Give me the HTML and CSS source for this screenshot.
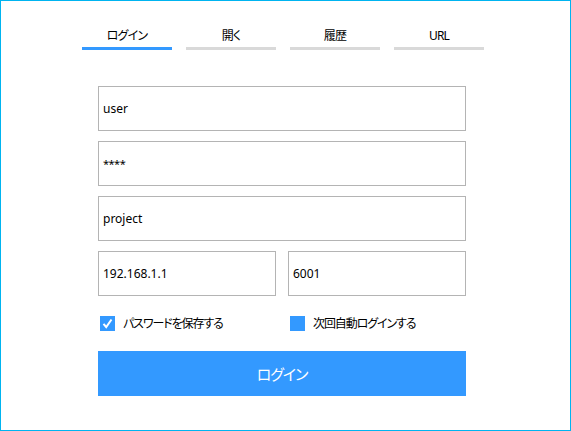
FILE: index.html
```html
<!DOCTYPE html>
<html lang="ja">
<head>
<meta charset="utf-8">
<link rel="stylesheet" href="styles.css">
</head>
<body>
<div class="frame">
  <div class="tabs">
    <div class="tab active">ログイン</div>
    <div class="tab">開く</div>
    <div class="tab">履歴</div>
    <div class="tab">URL</div>
  </div>
  <div class="form">
    <div class="field">user</div>
    <div class="field pw">****</div>
    <div class="field">project</div>
    <div class="pair">
      <div class="field">192.168.1.1</div>
      <div class="field">6001</div>
    </div>
    <div class="pair checks">
      <div class="check">
        <span class="box"><svg width="15" height="15" viewBox="0 0 15 15"><polyline points="3.5,7.8 6.2,11 11.5,3.5" fill="none" stroke="#fff" stroke-width="2"/></svg></span>
        <span class="label">パスワードを保存する</span>
      </div>
      <div class="check">
        <span class="box"></span>
        <span class="label">次回自動ログインする</span>
      </div>
    </div>
    <div class="button">ログイン</div>
  </div>
</div>
</body>
</html>
```

FILE: styles.css
```css
* { box-sizing: border-box; }
html, body { margin: 0; padding: 0; background: #fff; }
body {
  font-family: "Noto Sans", "Noto Sans CJK JP", sans-serif;
  font-feature-settings: "palt" 1;
  color: #000;
}
.frame {
  width: 571px;
  height: 431px;
  border: 1px solid #00b4f0;
  overflow: hidden;
}
.tabs {
  display: flex;
  gap: 14px;
  padding-top: 27px;
  margin-left: 81px;
}
.tab {
  width: 90px;
  text-align: center;
  font-size: 12px;
  line-height: 16px;
  letter-spacing: -0.8px;
  padding-bottom: 3px;
  border-bottom: 3px solid #d9d9d9;
}
.tab.active { border-bottom-color: #3399ff; }
.form {
  margin-left: 97px;
  margin-top: 36px;
  width: 368px;
  display: flex;
  flex-direction: column;
  gap: 10px;
}
.field {
  height: 45px;
  border: 1px solid #b4b4b4;
  padding-left: 4px;
  display: flex;
  align-items: center;
  font-size: 12px;
}
.field.pw { font-size: 11px; letter-spacing: -0.5px; }
.pair {
  display: grid;
  grid-template-columns: 178px 178px;
  gap: 12px;
}
.checks {
  margin-top: 10px;
  margin-bottom: 10px;
}
.check {
  display: flex;
  align-items: center;
  gap: 8px;
  padding-left: 2px;
  height: 15px;
}
.box {
  width: 15px;
  height: 15px;
  background: #3399ff;
  display: block;
}
.box svg { display: block; }
.label {
  font-size: 12px;
  line-height: 15px;
  letter-spacing: -1.1px;
}
.button {
  height: 45px;
  background: #3399ff;
  color: #fff;
  font-size: 15px;
  letter-spacing: -1px;
  display: flex;
  align-items: center;
  justify-content: center;
}
```
